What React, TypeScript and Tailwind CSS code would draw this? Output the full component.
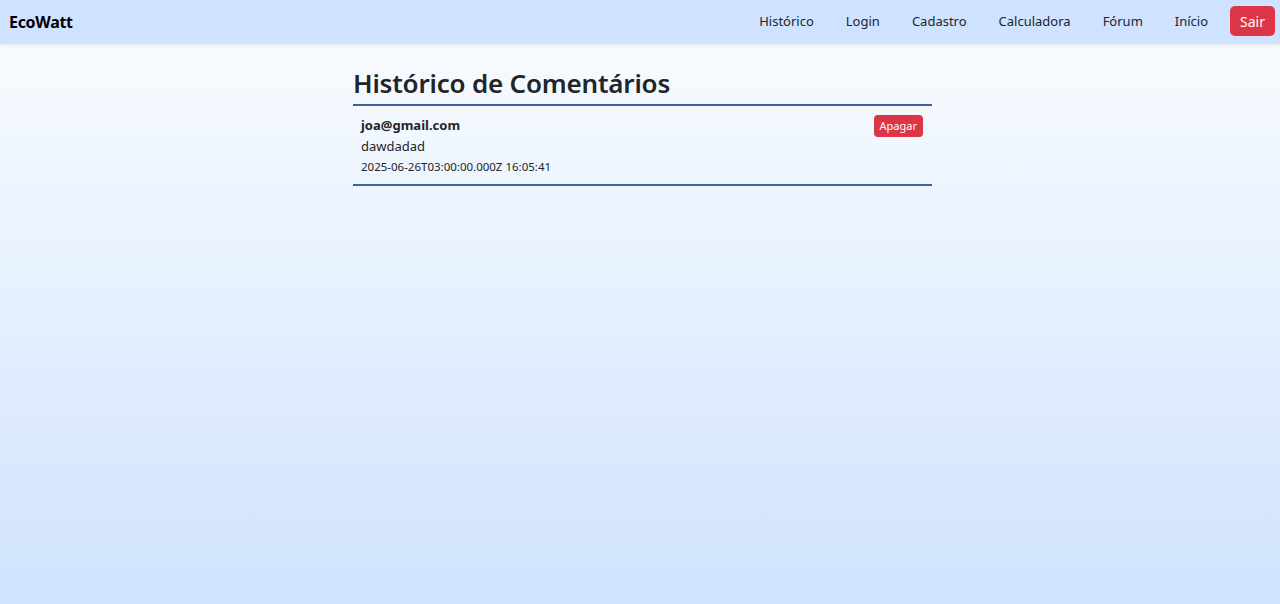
import React from "react";

const links = ["Histórico", "Login", "Cadastro", "Calculadora", "Fórum", "Início"];

export default function App() {
  return (
    <div
      className="min-h-[604px] bg-gradient-to-b from-[#fbfdff] to-[#d0e2fd] text-[#212529]"
      style={{ fontFamily: '"Noto Sans", "Open Sans", sans-serif' }}
    >
      <nav className="flex h-[44px] items-center justify-between bg-[#cfe2ff] pl-[9px] pr-[5px] shadow-[0_2px_4px_rgba(0,0,0,0.08)]">
        <span className="text-[16px] font-bold tracking-[-0.3px] text-black">EcoWatt</span>
        <div className="flex items-center">
          {links.map((l) => (
            <a key={l} className="px-4 text-[13px] text-[#212529]">
              {l}
            </a>
          ))}
          <button className="-mt-[2px] ml-[6px] h-[30px] rounded-[5px] bg-[#dc3545] px-[10px] text-[14px] text-white">
            Sair
          </button>
        </div>
      </nav>

      <main className="ml-[353px] w-[579px] pt-[22px]">
        <h1 className="pb-[4px] text-[26px] font-semibold leading-[34px] tracking-[-0.2px]">
          Histórico de Comentários
        </h1>
        <div className="flex items-start justify-between border-y-2 border-[#3d62a0] pb-[7px] pl-[8px] pr-[9px] pt-[9px]">
          <div className="flex flex-col">
            <span className="text-[13px] font-bold leading-[21px]">joa@gmail.com</span>
            <span className="text-[13px] leading-[20px]">dawdadad</span>
            <span className="text-[11.5px] leading-[21px]">2025-06-26T03:00:00.000Z 16:05:41</span>
          </div>
          <button className="h-[22px] rounded-[4px] bg-[#dc3545] px-[6px] text-[11px] text-white">
            Apagar
          </button>
        </div>
      </main>
    </div>
  );
}
